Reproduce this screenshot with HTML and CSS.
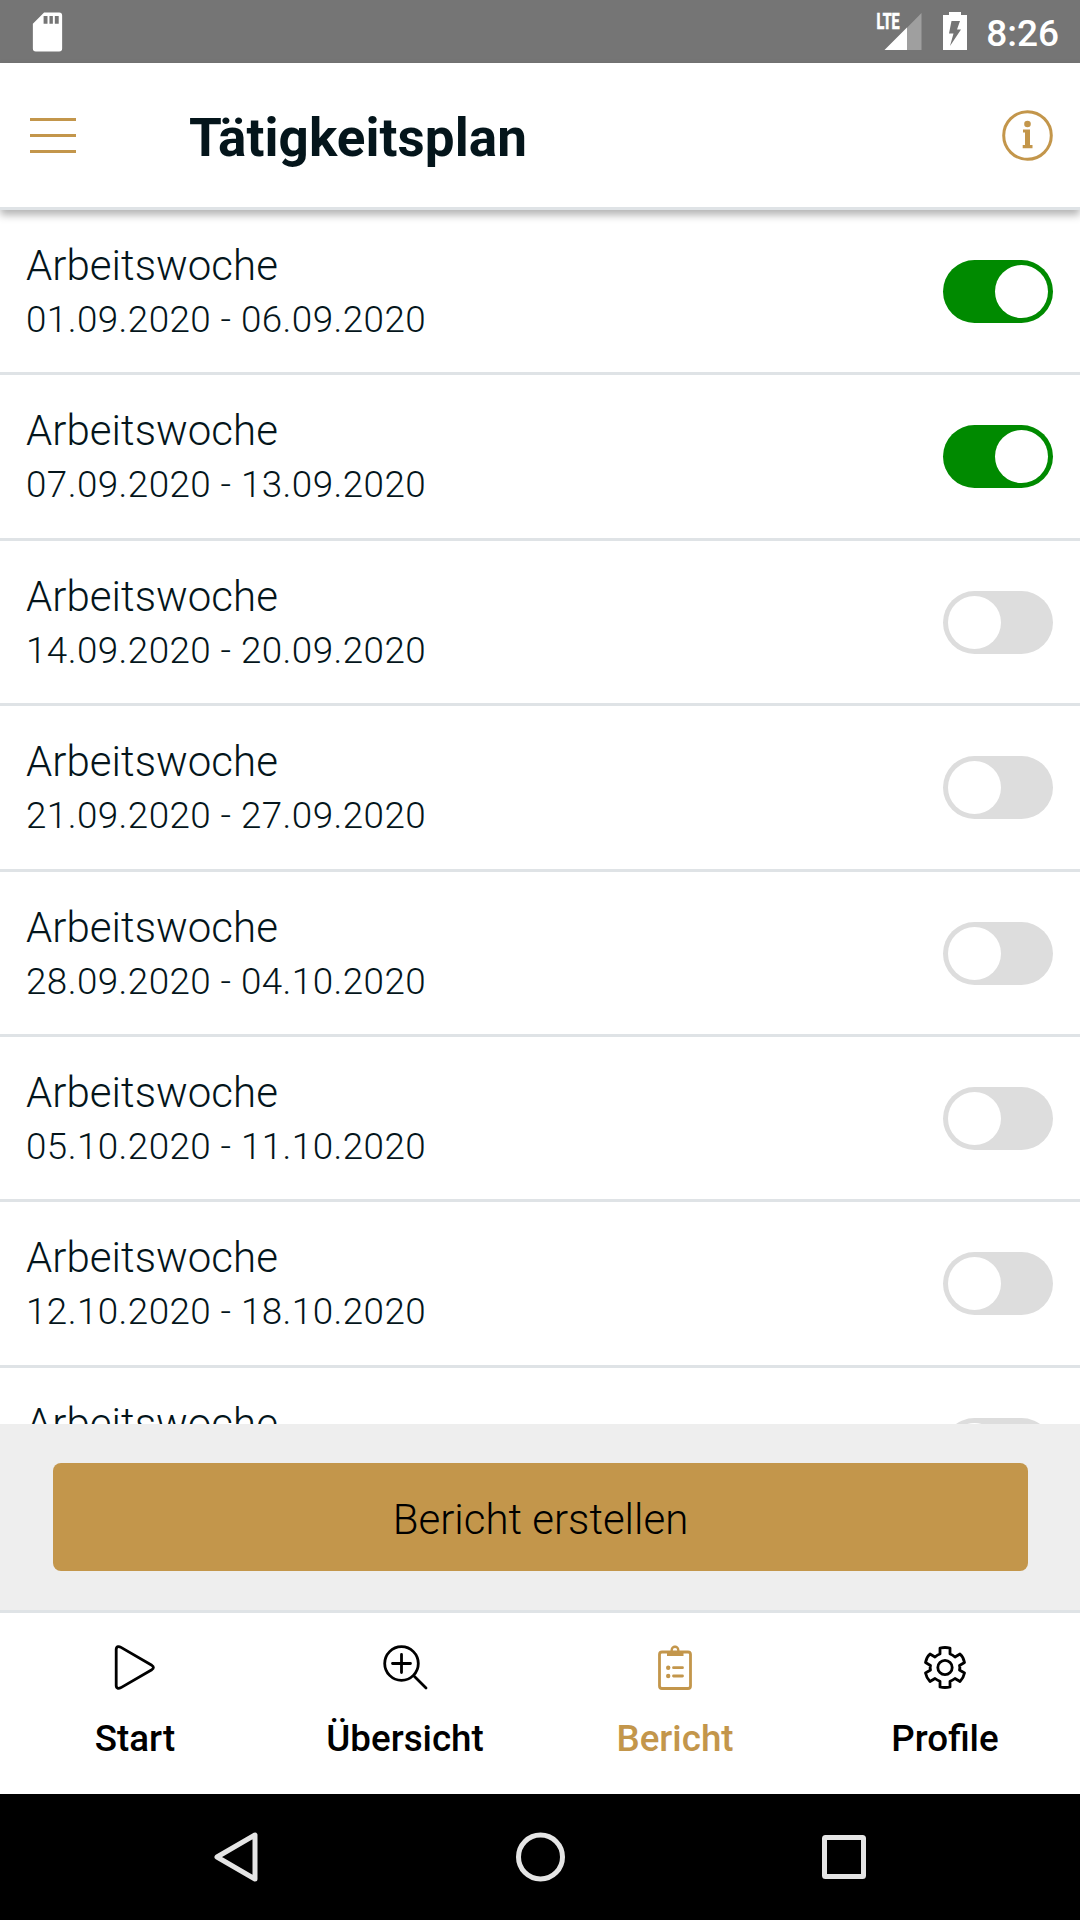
FILE: index.html
```html
<!DOCTYPE html>
<html lang="de">
<head>
<meta charset="utf-8">
<title>Tätigkeitsplan</title>
<link rel="stylesheet" href="styles.css">
</head>
<body>
<div class="screen">
  <div class="status">
    <svg class="sd" viewBox="0 0 30 41"><path fill="#fff" fill-rule="evenodd" d="M11.5 .5H27Q30 .5 30 3.500V37.500Q30 40.500 27 40.500H3Q0 40.500 0 37.500V12ZM11 4V12H15V4ZM17 4V12H20.500V4ZM22.500 4V12H26.500V4Z"/></svg>
    <div class="status-right">
      <svg class="signal" viewBox="0 0 46 38"><path fill="#9f9f9f" d="M45.500 0V37H9Z"/><path fill="#fff" d="M31 14.500V37H8.500Z"/><path fill="#757575" d="M0 0H25V18H0Z"/><text class="lte" x="0.500" y="15.800" textLength="23" lengthAdjust="spacingAndGlyphs">LTE</text></svg>
      <svg class="battery" viewBox="0 0 24 38"><path fill="#fff" d="M6 0H18V3H24V38H0V3H6Z"/><path fill="#757575" d="M8.500 9H17L14 17.500H18L7 34L10.500 21.500H6Z"/></svg>
      <span class="clock">8:26</span>
    </div>
  </div>
  <header class="header">
    <div class="burger"><i></i><i></i><i></i></div>
    <h1>Tätigkeitsplan</h1>
    <svg class="info" viewBox="0 0 51 51" fill="#c3964b"><circle cx="25.500" cy="25.500" r="23.800" fill="none" stroke="#c3964b" stroke-width="3"/><circle cx="25.500" cy="14" r="3.300"/><path d="M21 19.500H28V35H30.500V38.300H20.700V35H23V22.500H21Z"/></svg>
  </header>
  <main class="list">
    <div class="row"><div><p class="name">Arbeitswoche</p><p class="date">01.09.2020 - 06.09.2020</p></div><span class="toggle on"></span></div>
    <div class="row"><div><p class="name">Arbeitswoche</p><p class="date">07.09.2020 - 13.09.2020</p></div><span class="toggle on"></span></div>
    <div class="row"><div><p class="name">Arbeitswoche</p><p class="date">14.09.2020 - 20.09.2020</p></div><span class="toggle"></span></div>
    <div class="row"><div><p class="name">Arbeitswoche</p><p class="date">21.09.2020 - 27.09.2020</p></div><span class="toggle"></span></div>
    <div class="row"><div><p class="name">Arbeitswoche</p><p class="date">28.09.2020 - 04.10.2020</p></div><span class="toggle"></span></div>
    <div class="row"><div><p class="name">Arbeitswoche</p><p class="date">05.10.2020 - 11.10.2020</p></div><span class="toggle"></span></div>
    <div class="row"><div><p class="name">Arbeitswoche</p><p class="date">12.10.2020 - 18.10.2020</p></div><span class="toggle"></span></div>
    <div class="row"><div><p class="name">Arbeitswoche</p></div><span class="toggle"></span></div>
  </main>
  <div class="action"><button class="create">Bericht erstellen</button></div>
  <nav class="tabs">
    <div class="tab">
      <svg viewBox="0 0 45 45"><path d="M5 1.700Q3.200 2.200 3.200 4.500V40.500Q3.200 42.800 5 43.300Q6.300 43.500 8 42.600L38.800 24.700Q42 22.500 38.800 20.300L8 2.400Q6.300 1.400 5 1.700Z"/></svg>
      <span>Start</span>
    </div>
    <div class="tab">
      <svg viewBox="0 0 45 45"><circle cx="18.500" cy="18.500" r="16.800"/><path d="M18.500 9.500V27.500M9.500 18.500H27.500M31 31L43 43"/></svg>
      <span>Übersicht</span>
    </div>
    <div class="tab active">
      <svg viewBox="0 0 45 45"><rect x="6.500" y="7" width="31" height="36.500" rx="2.500"/><path fill="currentColor" stroke="none" fill-rule="evenodd" d="M14 6H17.500C17-1.500 27-1.500 26.500 6H30.500V11H14ZM22 3A2.200 2.200 0 1 0 22 7.400A2.200 2.200 0 1 0 22 3Z"/><path d="M20.500 22.700H29.500M20.500 31H29.500"/><circle class="dot" cx="15.200" cy="22.700" r="2.200"/><circle class="dot" cx="15.200" cy="31" r="2.200"/></svg>
      <span>Bericht</span>
    </div>
    <div class="tab">
      <svg viewBox="0 0 45 45"><path d="M17 3Q22 2 27 3V9Q29.500 9.700 32 12L37 9Q40.500 12 41.500 17.500L36.500 20.500Q37.200 22.500 36.500 25L41.500 28Q40.500 33 37 36.500L32 33.500Q29.500 35.500 27 36.300V42Q22 43 17 42V36.300Q14.500 35.500 12 33.500L7 36.500Q3.500 33 2.500 28L7.500 25Q6.800 22.500 7.500 20.500L2.500 17.500Q3.500 12 7 9L12 12Q14.500 9.700 17 9Z"/><circle cx="22" cy="22.500" r="7.200"/></svg>
      <span>Profile</span>
    </div>
  </nav>
  <div class="system">
    <svg viewBox="0 0 50 50"><path d="M42 3V47L4 25Z"/></svg>
    <svg viewBox="0 0 50 50"><circle cx="24.500" cy="25" r="22"/></svg>
    <svg viewBox="0 0 50 50"><rect x="5.500" y="5.500" width="39" height="39" rx="1"/></svg>
  </div>
</div>
</body>
</html>
```

FILE: styles.css
```css
* { box-sizing: border-box; }
body, h1, p { margin: 0; }
body { background: #fff; font-family: Roboto, sans-serif; color: #04151b; }
.screen { width: 1080px; height: 1920px; display: flex; flex-direction: column; overflow: hidden; }

.status { height: 63px; flex: none; background: #757575; display: flex; justify-content: space-between; padding: 12px 21px 0 32px; }
.sd { width: 31px; height: 40px; }
.status-right { display: flex; }
.signal { width: 46px; height: 38px; margin: 1px 21px 0 0; overflow: visible; }
.lte { font: 700 21.500px Roboto, sans-serif; fill: #fff; stroke: #fff; stroke-width: .700; }
.battery { width: 24px; height: 38px; margin-right: 19px; }
.clock { font-size: 37px; font-weight: 500; line-height: 43px; color: #fff; }

.header { height: 147px; flex: none; border-bottom: 3px solid #dfe3e6; display: flex; align-items: center; padding: 0 27px 0 30px; background: #fff; box-shadow: 0 5px 8px rgba(0, 0, 0, .3); z-index: 1; }
.burger { width: 46px; display: grid; gap: 13px; }
.burger i { height: 3px; background: #c3964b; }
h1 { font-size: 53px; font-weight: 700; line-height: 60px; letter-spacing: .070px; margin: 5px 0 0 113px; }
.info { width: 51px; height: 51px; margin-left: auto; }

.list { height: 1214px; flex: none; overflow: hidden; }
.row { height: 165.375px; border-bottom: 3px solid #dfe3e6; display: flex; justify-content: space-between; padding: 30px 27px 0 26px; font-weight: 300; }
.name { font-size: 42px; line-height: 52px; letter-spacing: .050px; }
.date { font-size: 36.750px; line-height: 55px; letter-spacing: .450px; }
.toggle { width: 110px; height: 63px; margin-top: 20px; border-radius: 32px; background: #ddd; padding: 5px; display: flex; }
.toggle::after { content: ""; width: 53px; height: 53px; border-radius: 50%; background: #fff; }
.toggle.on { background: #008a00; justify-content: flex-end; }

.action { height: 186px; flex: none; background: #eee; padding: 39px 52px 0 53px; }
.create { display: block; width: 100%; height: 108px; padding: 4px 0 0; border: 0; border-radius: 8px; background: #c3964b; color: #000; font: 300 42px Roboto, sans-serif; }

.tabs { height: 184px; flex: none; border-top: 3px solid #dfe3e6; display: grid; grid-template-columns: repeat(4, 1fr); color: #000; }
.tab { display: flex; flex-direction: column; align-items: center; padding-top: 32px; gap: 27px; font-size: 36.750px; font-weight: 500; line-height: 43px; }
.tab svg { width: 45px; height: 45px; fill: none; stroke: currentColor; stroke-width: 2.800; stroke-linecap: round; stroke-linejoin: round; }
.tab .dot { fill: currentColor; stroke: none; }
.active { color: #c3964b; }

.system { height: 126px; flex: none; background: #000; display: flex; justify-content: space-between; align-items: center; padding: 0 211px 0 213px; }
.system svg { width: 50px; height: 50px; fill: none; stroke: #e5e5e5; stroke-width: 5; stroke-linejoin: round; }
```
